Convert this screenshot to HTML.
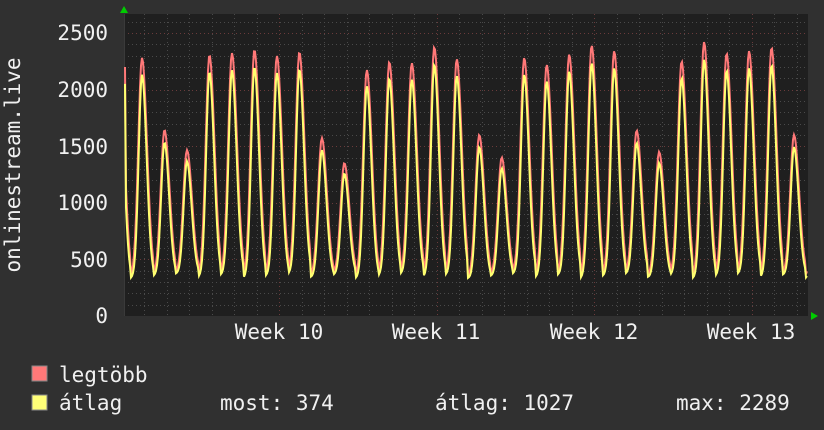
<!DOCTYPE html>
<html><head><meta charset="utf-8">
<style>
html,body{margin:0;padding:0;background:#303030;}
body{width:824px;height:430px;overflow:hidden;font-family:"DejaVu Sans Mono","Liberation Mono",monospace;}
</style></head>
<body>
<svg id="g" width="824" height="430" xmlns="http://www.w3.org/2000/svg" style="position:absolute;left:0;top:0">
<rect x="0" y="0" width="824" height="430" fill="#303030"/>
<rect x="124" y="14" width="684" height="302" fill="#1f1f1f"/>
<g id="grid"></g>
<g id="data"></g>
<polygon points="120,13 128,13 124,6" fill="#00cc00"/>
<polygon points="811,312 811,320 818,316" fill="#00cc00"/>
<g font-size="21" fill="#f0f0f0" font-family="DejaVu Sans Mono, Liberation Mono, monospace">
<text x="108" y="40" text-anchor="end">2500</text>
<text x="108" y="97" text-anchor="end">2000</text>
<text x="108" y="154" text-anchor="end">1500</text>
<text x="108" y="210" text-anchor="end">1000</text>
<text x="108" y="267" text-anchor="end">500</text>
<text x="108" y="323" text-anchor="end">0</text>
<text x="279" y="339" text-anchor="middle">Week 10</text>
<text x="436" y="339" text-anchor="middle">Week 11</text>
<text x="594" y="339" text-anchor="middle">Week 12</text>
<text x="751" y="339" text-anchor="middle">Week 13</text>
<text transform="translate(20,165) rotate(-90)" text-anchor="middle">onlinestream.live</text>
<rect x="32" y="366" width="15" height="15" fill="#ff7878" stroke="#888" stroke-width="1"/>
<rect x="32" y="395" width="15" height="15" fill="#ffff78" stroke="#888" stroke-width="1"/>
<text x="59" y="382">legtöbb</text>
<text x="59" y="410">átlag</text>
<text x="220" y="410">most: 374</text>
<text x="435" y="410">átlag: 1027</text>
<text x="676" y="410">max: 2289</text>
</g>
</svg>
<script>
var NS="http://www.w3.org/2000/svg";
var grid=document.getElementById("grid"),data=document.getElementById("data");
function ln(x1,y1,x2,y2,c,dash){var l=document.createElementNS(NS,"line");l.setAttribute("x1",x1);l.setAttribute("y1",y1);l.setAttribute("x2",x2);l.setAttribute("y2",y2);l.setAttribute("stroke",c);l.setAttribute("stroke-width",1);if(dash)l.setAttribute("stroke-dasharray",dash);grid.appendChild(l);}
var s=500/56.6;
for(var v=100;v<=2600;v+=100){var y=Math.round(316-v/s)+0.5;if(y<14)break;ln(124,y,808,y,v%500==0?"#6a3b3b":"#4a4a4a","1,3");}
var day=22.5;
for(var x=279-day*7;x<808;x+=day){if(x<124)continue;var xx=Math.round(x)+0.5;var major=Math.abs(((x-279)/(7*day))-Math.round((x-279)/(7*day)))<0.01;ln(xx,14,xx,316,major?"#6a3b3b":"#4a4a4a","1,3");}
ln(124.5,14,124.5,316,"#3a3a3a");
var peaks=[2280,1643,1466,2305,2323,2350,2297,2330,1572,1351,2173,2244,2235,2376,2270,1600,1400,2280,2220,2310,2390,2340,1640,1450,2250,2420,2320,2340,2370,1600];
var p0=142,step=(794-142)/29;
function val(x,mx){var k=Math.round((x-p0)/step);var pk;var ph=(x-p0)/step-k;
 if(k<0){pk=2200;}else if(k>=peaks.length){pk=1600;}else pk=peaks[k];
 var tr=345+((k*37)%5)*10;
 var sig=ph<0?0.21:0.29; if(mx)sig+=0.025;
 var f=Math.exp(-Math.pow(ph/sig,2));
 if(!mx)pk=pk*0.94;
 var v=tr+(pk-tr)*f;
 if(!mx){v-=12;}
 return v;}
function path(mx){var d="";for(var x=125;x<=807;x++){var v=val(x,mx);if(x==125)v=mx?2200:2050;var y=316-v/s;d+=(x==125?"M":"L")+x+","+y.toFixed(1);}return d;}
function add(d,c){var p=document.createElementNS(NS,"path");p.setAttribute("d",d);p.setAttribute("fill","none");p.setAttribute("stroke",c);p.setAttribute("stroke-width",2);data.appendChild(p);}
add(path(true),"#ff7878");add(path(false),"#ffff70");
</script>
</body></html>
